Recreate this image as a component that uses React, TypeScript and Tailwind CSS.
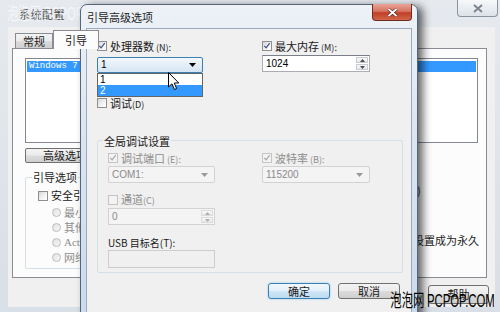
import React from 'react';

const btnBg = 'bg-[linear-gradient(180deg,#f3f3f3_0%,#ebebeb_48%,#dcdcdc_52%,#cfcfcf_100%)]';

function Check({ checked = false, disabled = false }: { checked?: boolean; disabled?: boolean }) {
  return (
    <span
      className={`relative block w-[10px] h-[10px] shrink-0 border ${
        disabled
          ? 'border-[#c5c5c5] bg-[#f3f3f3]'
          : 'border-[#8e8f8f] bg-[linear-gradient(135deg,#d6d6d6_0%,#f4f4f4_60%,#ffffff_100%)]'
      }`}
    >
      {checked && (
        <svg viewBox="0 0 10 10" className="absolute inset-0 w-full h-full">
          <path
            d="M1.6 4.8 L3.9 7.4 L8.4 1.4"
            fill="none"
            stroke={disabled ? '#a9a9a9' : '#3d5287'}
            strokeWidth="1.5"
          />
        </svg>
      )}
    </span>
  );
}

function Radio() {
  return (
    <span className="block w-[9px] h-[9px] shrink-0 rounded-full border border-[#bcbcbc] bg-[linear-gradient(135deg,#e2e2e2,#f7f7f7)]" />
  );
}

function Arrow({ color }: { color: string }) {
  return (
    <svg width="7" height="4" viewBox="0 0 7 4">
      <path d="M0 0 H7 L3.5 4 Z" fill={color} />
    </svg>
  );
}

function Combo({ value, w, disabled = false }: { value: string; w: string; disabled?: boolean }) {
  return (
    <div
      className={`${w} h-[17px] flex items-center justify-between pl-[3px] pr-[6px] border rounded-[2px] text-[10px] leading-none ${
        disabled ? 'border-[#d2d2d2] bg-[#f4f4f4] text-[#8a8a8a]' : 'border-[#707070] bg-white text-black'
      }`}
    >
      <span className="font-['Liberation_Sans',sans-serif]">{value}</span>
      <Arrow color={disabled ? '#9a9a9a' : '#000'} />
    </div>
  );
}

function Spin({ value, w, disabled = false }: { value: string; w: string; disabled?: boolean }) {
  const c = disabled ? '#b0b0b0' : '#4d4d4d';
  return (
    <div
      className={`${w} h-[17px] flex border ${
        disabled ? 'border-[#d2d2d2] bg-[#f4f4f4] text-[#8a8a8a]' : 'border-[#abadb3] border-t-[#7a7f8a] bg-white text-black'
      }`}
    >
      <span className="flex-1 pl-[3px] flex items-center text-[10px] leading-none font-['Liberation_Sans',sans-serif]">
        {value}
      </span>
      <div className="w-[14px] flex flex-col gap-px p-px">
        <div className={`flex-1 flex items-center justify-center border ${disabled ? 'border-[#dcdcdc]' : 'border-[#c8ccd2]'} bg-[linear-gradient(180deg,#fafafa,#e6e6e6)]`}>
          <svg width="5" height="3" viewBox="0 0 5 3"><path d="M0 3 H5 L2.5 0 Z" fill={c} /></svg>
        </div>
        <div className={`flex-1 flex items-center justify-center border ${disabled ? 'border-[#dcdcdc]' : 'border-[#c8ccd2]'} bg-[linear-gradient(180deg,#fafafa,#e6e6e6)]`}>
          <svg width="5" height="3" viewBox="0 0 5 3"><path d="M0 0 H5 L2.5 3 Z" fill={c} /></svg>
        </div>
      </div>
    </div>
  );
}

function CheckRow({ label, hot, checked = false, disabled = false, h = 'h-[12px]' }: { label: string; hot: string; checked?: boolean; disabled?: boolean; h?: string }) {
  return (
    <div className={`${h} flex items-center gap-[3px] text-[11px] leading-none ${disabled ? 'text-[#8d8d8d]' : 'text-[#1a1a1a]'}`}>
      <Check checked={checked} disabled={disabled} />
      <span className="whitespace-nowrap">
        {label}
        <span className="text-[9px]">{hot}</span>
      </span>
    </div>
  );
}

export default function App() {
  return (
    <div className="relative w-[500px] h-[312px] overflow-hidden bg-[linear-gradient(180deg,#e6eaef_0%,#d9dfe6_100%)] font-['Noto_Sans_CJK_SC','Noto_Sans',sans-serif]">
      {/* back window title bar */}
      <div className="h-[27px] flex items-start justify-between">
        <span className="mt-[9px] ml-[19px] text-[11px] leading-none text-[#444] tracking-[0.5px]">系统配置</span>
        <div className="w-[41px] h-[17px] mr-[2px] rounded-b-[4px] border border-t-0 border-[#8a949f] bg-[linear-gradient(180deg,#f7f8fa,#dde2e8)] flex items-center justify-center">
          <svg width="10" height="9" viewBox="0 0 10 9">
            <path d="M1 1 L9 8 M9 1 L1 8" stroke="#7c8590" strokeWidth="2" />
          </svg>
        </div>
      </div>
      <div className="absolute left-[7px] top-[1px] text-[18px] leading-[22px] text-white/60 scale-x-[0.63] origin-left whitespace-nowrap">
        泡泡网 <span className="font-['Liberation_Sans',sans-serif]">PCPOP.COM</span>
      </div>

      {/* back window client */}
      <div className="ml-[8px] w-[487px] h-[280px] bg-[#f0f0f0]">
        <div className="h-[21px] flex items-end pl-[7px]">
          <div className={`w-[38px] h-[15px] border border-b-0 border-[#898c95] ${btnBg} flex items-center justify-center text-[11px] leading-none text-[#1a1a1a]`}>
            常规
          </div>
          <div className="relative z-10 w-[46px] h-[19px] -mb-px border border-b-0 border-[#898c95] bg-[#fcfcfc] flex items-center justify-center text-[11px] leading-none text-[#1a1a1a]">
            引导
          </div>
        </div>
        <div className="ml-[4px] w-[475px] h-[230px] border border-[#898c95] bg-[#fcfcfc] pl-[12px] pt-[9px]">
          <div className="w-[453px] h-[85px] border border-[#828790] bg-white pt-[2px] px-px">
            <div className="h-[11px] bg-[#3399ff] text-white text-[9px] leading-[11px] pl-[2px] font-['Liberation_Mono',monospace]">
              Windows 7
            </div>
          </div>
          <div className="flex mt-[5px]">
            <div className="w-[385px] flex flex-col">
              <div className={`w-[110px] h-[15px] border border-[#707070] rounded-[2px] ${btnBg} flex items-center pl-[17px] text-[11px] leading-none text-[#1a1a1a] whitespace-nowrap`}>
                高级选项
              </div>
              <div className="mt-[14px] h-[92px] border border-[#d5dfe5] rounded-[2px]">
                <div className="-mt-[7px] ml-[6px] w-fit px-px h-[13px] bg-[#fcfcfc] text-[11px] leading-[13px] text-[#1a1a1a]">
                  引导选项
                </div>
                <div className="ml-[12px] mt-[6px]">
                  <CheckRow label="安全引" hot="" h="h-[11px]" />
                </div>
                <div className="ml-[26px] mt-[7px] flex flex-col gap-[6px] text-[11px] leading-none text-[#8d8d8d]">
                  <div className="h-[9px] flex items-center gap-[3px]"><Radio /><span>最小</span></div>
                  <div className="h-[9px] flex items-center gap-[3px]"><Radio /><span>其他</span></div>
                  <div className="h-[9px] flex items-center gap-[3px]"><Radio /><span className="font-['Liberation_Serif',serif]">Act</span></div>
                  <div className="h-[9px] flex items-center gap-[3px]"><Radio /><span>网络</span></div>
                </div>
              </div>
            </div>
            <div className="flex-1 flex flex-col text-[11px] leading-none text-[#1a1a1a]">
              <div className="mt-[37px] ml-[7px] h-[11px] whitespace-nowrap">)</div>
              <div className="mt-[39px] ml-[3px] h-[11px] whitespace-nowrap">设置成为永久</div>
            </div>
          </div>
        </div>
        <div className="mt-[7px] flex justify-end pr-[6px]">
          <div className={`w-[61px] h-[19px] border border-[#707070] rounded-[3px] ${btnBg} flex items-center justify-center text-[11px] leading-none text-[#1a1a1a]`}>
            帮助
          </div>
        </div>
      </div>

      {/* front dialog */}
      <div className="absolute left-[80px] top-[4px] w-[338px] h-[330px] rounded-t-[7px] border border-[#56667a] bg-[linear-gradient(180deg,#eef2f7_0%,#dae5f1_40%,#c9d9ec_100%)] shadow-[5px_2px_9px_rgba(0,0,0,0.6)]">
        <div className="h-[23px] flex items-start justify-between">
          <span className="mt-[7px] ml-[6px] text-[11px] leading-none text-[#1e1e1e]">引导高级选项</span>
          <div className="w-[40px] h-[17px] mr-[5px] -mt-px rounded-b-[4px] border border-t-0 border-[#6e2b22] bg-[linear-gradient(180deg,#e9a496_0%,#d77563_45%,#c23f26_55%,#d0674a_100%)] flex items-center justify-center">
            <svg width="11" height="9" viewBox="0 0 11 9">
              <path d="M1.5 1 L9.5 8 M9.5 1 L1.5 8" stroke="#4a1a12" strokeWidth="3" />
              <path d="M1.5 1 L9.5 8 M9.5 1 L1.5 8" stroke="#ffffff" strokeWidth="1.8" />
            </svg>
          </div>
        </div>
        <div className="mx-[5px] h-[300px] border border-[#9aaac0] bg-[#f0f0f0] pt-[11px] pl-[10px]">
          <div className="flex">
            <div className="w-[165px] flex flex-col">
              <CheckRow label="处理器数" hot=" (N):" checked />
              <div className="relative mt-[5px] w-[106px] h-[16px]">
                <div className="h-[16px] flex items-center justify-between pl-[3px] pr-[6px] border border-[#3c7fb1] rounded-[2px] bg-[linear-gradient(180deg,#f4f9fd_0%,#e3eef7_50%,#d6e6f3_100%)] text-[10px] leading-none">
                  <span className="font-['Liberation_Sans',sans-serif]">1</span>
                  <Arrow color="#000" />
                </div>
                <div className="absolute left-0 top-[16px] w-[106px] h-[24px] border border-[#646464] bg-white text-[10px] leading-[11px] font-['Liberation_Sans',sans-serif]">
                  <div className="h-[11px] pl-[2px]">1</div>
                  <div className="h-[11px] pl-[2px] bg-[#3399ff] text-white">2</div>
                </div>
                <svg className="absolute left-[71px] top-[15px]" width="12" height="19" viewBox="0 0 12 19">
                  <path d="M0.5 0.5 L0.5 15 L4 11.8 L6.4 17.5 L8.6 16.6 L6.3 11 L10.8 11 Z" fill="#fff" stroke="#000" strokeWidth="1" strokeLinejoin="round" />
                </svg>
              </div>
              <div className="mt-[24px]">
                <CheckRow label="调试" hot="(D)" />
              </div>
            </div>
            <div className="w-[108px] flex flex-col">
              <CheckRow label="最大内存" hot=" (M):" checked />
              <div className="mt-[3px]">
                <Spin value="1024" w="w-[108px]" />
              </div>
            </div>
          </div>

          <div className="mt-[31px] w-[306px] h-[133px] border border-[#d5dfe5] rounded-[2px]">
            <div className="-mt-[7px] ml-[5px] w-fit px-px h-[14px] bg-[#f0f0f0] text-[11px] leading-[14px] text-[#1a1a1a]">
              全局调试设置
            </div>
            <div className="flex pl-[10px]">
              <div className="w-[154px] flex flex-col">
                <div className="mt-[4px]">
                  <CheckRow label="调试端口" hot=" (E):" checked disabled />
                </div>
                <div className="mt-[2px]">
                  <Combo value="COM1:" w="w-[107px]" disabled />
                </div>
                <div className="mt-[11px]">
                  <CheckRow label="通道" hot="(C)" disabled h="h-[11px]" />
                </div>
                <div className="mt-[3px]">
                  <Spin value="0" w="w-[107px]" disabled />
                </div>
                <div className="mt-[12px] h-[11px] text-[10px] leading-[11px] text-[#1a1a1a] whitespace-nowrap">
                  USB 目标名(T):
                </div>
                <div className="mt-[2px] w-[107px] h-[18px] border border-[#cdcdcd] bg-[#f0f0f0]" />
              </div>
              <div className="w-[108px] flex flex-col">
                <div className="mt-[4px]">
                  <CheckRow label="波特率" hot=" (B):" checked disabled />
                </div>
                <div className="mt-[2px]">
                  <Combo value="115200" w="w-[108px]" disabled />
                </div>
              </div>
            </div>
          </div>

          <div className="mt-[10px] w-[306px] pr-[3px] flex justify-end gap-[8px]">
            <div className="w-[62px] h-[16px] border border-[#3c7fb1] rounded-[3px] bg-[linear-gradient(180deg,#f2f8fc_0%,#e4f0f9_48%,#cfe6f6_52%,#bcdcf2_100%)] shadow-[0_0_2px_#7fc3ec] flex items-center justify-center text-[11px] leading-none text-[#1a1a1a]">
              确定
            </div>
            <div className={`w-[62px] h-[16px] border border-[#707070] rounded-[3px] ${btnBg} flex items-center justify-center text-[11px] leading-none text-[#1a1a1a]`}>
              取消
            </div>
          </div>
        </div>
      </div>

      {/* watermark */}
      <div className="absolute right-[5px] top-[288px] text-[18px] leading-[22px] text-black scale-x-[0.63] origin-right whitespace-nowrap">
        泡泡网 <span className="font-['Liberation_Sans',sans-serif]">PCPOP.COM</span>
      </div>
    </div>
  );
}
